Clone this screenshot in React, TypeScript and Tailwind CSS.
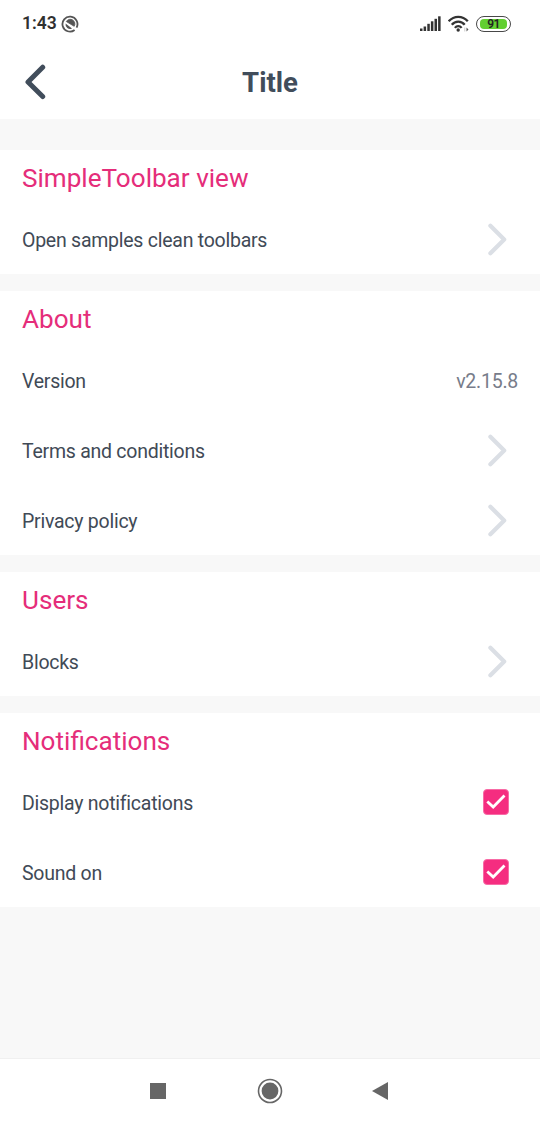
import React from "react";

function StatusBar() {
  return (
    <div className="flex h-[46px] items-center justify-between bg-white pl-[22px] pr-[29px] pt-[1px]">
      <div className="flex items-center gap-[4px]">
        <span className="pt-[1px] text-[17.5px] font-semibold leading-none text-[#303030]">1:43</span>
        <svg width="18" height="18" viewBox="0 0 18 18" fill="none" stroke="#555">
          <path d="M13.6 15A7.500 7.500 0 1 1 15.600 12.600" strokeWidth="1.800" />
          <path d="M5.300 6.500A4.500 4.500 0 0 1 13.200 11.300Z" fill="#555" stroke="#555" strokeWidth="0.800" />
          <path d="M4.600 8.500L11 13.400A4.500 4.500 0 0 1 4.600 8.500Z" fill="#555" stroke="none" />
        </svg>
      </div>
      <div className="flex items-center">
        <svg width="22" height="16" viewBox="0 0 22 16" fill="#333">
          <rect x="0" y="12.500" width="2.500" height="2.500" />
          <rect x="3.600" y="10.500" width="2.500" height="4.500" />
          <rect x="7.300" y="7.800" width="2.500" height="7.200" />
          <rect x="10.900" y="5.300" width="2.500" height="9.700" />
          <rect x="14.500" y="2.800" width="2.500" height="12.200" />
          <rect x="18.100" y="0.300" width="2.500" height="14.700" />
        </svg>
        <svg className="ml-[6px]" width="22" height="18" viewBox="0 0 22 18" fill="none" stroke="#333" strokeWidth="2.300">
          <path d="M0.700 6.300C6 0.300 14.500 0.300 19.800 6.300" />
          <path d="M3.800 9.700C7.200 5.500 13.300 5.500 16.700 9.700" />
          <path d="M6.900 12.900C8.800 10.500 11.700 10.500 13.600 12.900" />
          <circle cx="10.200" cy="15" r="1.700" fill="#333" stroke="none" />
          <path d="M18.500 12.500L20.500 14.500L18.500 16.500Z" fill="#555" stroke="none" />
          <path d="M16.800 12.500V16.500" stroke="#ccc" strokeWidth="1" />
        </svg>
        <div className="ml-[6px] flex h-[16px] w-[35px] items-center justify-center rounded-full border-[1.500px] border-[#484848] bg-white">
          <div className="flex h-[10px] w-[27px] items-center justify-center rounded-[4px] bg-[#62cf31] text-[12px] font-semibold leading-none tracking-[-0.5px] text-[#222]">91</div>
        </div>
      </div>
    </div>
  );
}

function Toolbar() {
  return (
    <header className="grid h-[73px] grid-cols-[72px_1fr_72px] items-center bg-white">
      <svg className="ml-[24px] -translate-y-px" width="23" height="36" viewBox="0 0 23 36" fill="none" stroke="#414d5b" strokeWidth="5" strokeLinecap="round" strokeLinejoin="round">
        <path d="M18.700 3.200L4 18L18.700 32.500" />
      </svg>
      <h1 className="text-center text-[27.500px] font-bold leading-none text-[#414d5b]">Title</h1>
    </header>
  );
}

function Chevron() {
  return (
    <svg className="mr-[10px]" width="20" height="34" viewBox="0 0 20 34" fill="none" stroke="#dbdfe5" strokeWidth="4.200" strokeLinecap="round" strokeLinejoin="round">
      <path d="M2.400 3.700L16.200 17.500L2.400 31.300" />
    </svg>
  );
}

function Check() {
  return (
    <span role="checkbox" aria-checked="true" className="mr-[9px] flex size-[26px] items-center justify-center rounded-[4px] border border-[#f86ba6] bg-[#f52d80]">
      <svg width="20" height="16" viewBox="0 0 20 16" fill="none" stroke="white" strokeWidth="2.800">
        <path d="M1.300 7.500L7.200 13L18.500 1.600" />
      </svg>
    </span>
  );
}

function Section({ title, children }: { title: string; children: React.ReactNode }) {
  return (
    <section className="bg-white pl-[22px] pr-[22px]">
      <h2 className="flex h-[54px] items-center pt-[2px] text-[26.100px] leading-none text-[#e52d7a]">{title}</h2>
      {children}
    </section>
  );
}

function Row({ label, children }: { label: string; children: React.ReactNode }) {
  return (
    <div className="flex h-[70px] items-center justify-between pb-[1px] text-[19.500px] leading-none tracking-[-0.250px] text-[#414a56]">
      <span className="pt-[4px]">{label}</span>
      {children}
    </div>
  );
}

export default function App() {
  return (
    <div className="flex h-[1123px] w-[540px] flex-col bg-[#f8f8f8] font-['Roboto',sans-serif]">
      <StatusBar />
      <Toolbar />
      <main className="flex flex-1 flex-col gap-[17px] pt-[31px]">
        <Section title="SimpleToolbar view">
          <Row label="Open samples clean toolbars"><Chevron /></Row>
        </Section>
        <Section title="About">
          <Row label="Version"><span className="pt-[4px] text-[#777c8a]">v2.15.8</span></Row>
          <Row label="Terms and conditions"><Chevron /></Row>
          <Row label="Privacy policy"><Chevron /></Row>
        </Section>
        <Section title="Users">
          <Row label="Blocks"><Chevron /></Row>
        </Section>
        <Section title="Notifications">
          <Row label="Display notifications"><Check /></Row>
          <Row label="Sound on"><Check /></Row>
        </Section>
      </main>
      <nav className="flex h-[65px] items-center justify-between border-t border-[#f0f0f0] bg-white pl-[150px] pr-[152px]">
        <span className="size-[16px] bg-[#666]" />
        <svg className="translate-x-px" width="26" height="26" viewBox="0 0 26 26">
          <circle cx="13" cy="13" r="11.500" fill="none" stroke="#666" strokeWidth="1.600" />
          <circle cx="13" cy="13" r="8.400" fill="#666" />
        </svg>
        <svg width="16" height="18" viewBox="0 0 16 18" fill="#666">
          <path d="M0 9L16 0V18Z" />
        </svg>
      </nav>
    </div>
  );
}
